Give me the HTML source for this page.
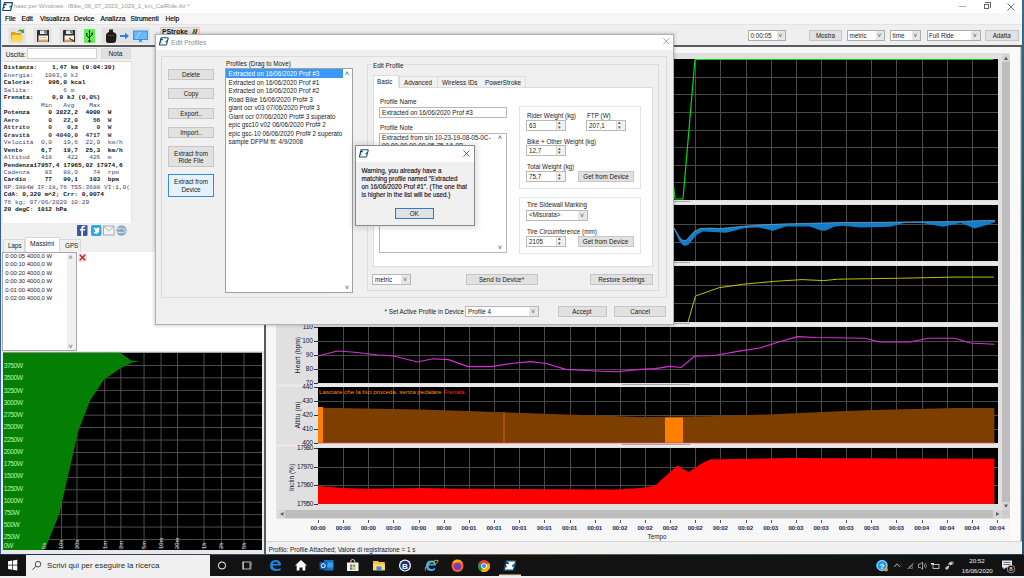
<!DOCTYPE html><html><head><meta charset="utf-8"><style>
*{margin:0;padding:0;box-sizing:border-box}
html,body{width:1024px;height:578px;overflow:hidden;background:#f0f0f0;position:relative;font-family:"Liberation Sans",sans-serif}
.a{position:absolute}
.t{position:absolute;font-family:"Liberation Sans",sans-serif;font-size:6.3px;line-height:7px;white-space:nowrap;color:#1a1a1a}
.btn{position:absolute;background:#e1e1e1;border:1px solid #c6c6c6;font-family:"Liberation Sans",sans-serif;font-size:6.3px;color:#1a1a1a;text-align:center;white-space:nowrap}
.inp{position:absolute;background:#fff;border:1px solid #b8b8b8;font-family:"Liberation Sans",sans-serif;font-size:6.3px;color:#1a1a1a;white-space:nowrap;overflow:hidden}
.mono{position:absolute;font-family:"Liberation Mono",monospace;font-size:6.2px;line-height:7.47px;white-space:pre;font-weight:bold;color:#111}
</style></head><body>
<div class="a" style="left:0px;top:0px;width:1024px;height:578px;background:#f0f0f0"></div>
<div class="a" style="left:0px;top:0px;width:1.3px;height:555px;background:#2f5ea6"></div>
<div class="a" style="left:1022px;top:0px;width:2px;height:555px;background:linear-gradient(#3a6a8a,#2a5060 40%,#4a6a70 70%,#305070)"></div>
<div class="a" style="left:2px;top:0px;width:1020px;height:12.5px;background:#fff"></div>
<svg class="a" style="left:2px;top:2px" width="11" height="9" viewBox="0 0 10 8.5"><path d="M2.3 0.6 H9.2 Q9.9 0.8 9.6 1.6 L8 7.6 Q7.8 8.2 7.1 8.2 H1 Q0.3 8 0.6 7.3 L2 1.2 Q2.1 0.6 2.3 0.6 Z" fill="#fff" stroke="#0f4a68" stroke-width="1.15"/><path d="M1.6 2.7 Q3 2.4 3.4 1.6 M1.9 2.6 H4.2 M1.3 5.2 H2.6 M6.8 5 Q7.8 4.6 8.2 3.6" stroke="#0f4a68" stroke-width="1.1" fill="none"/><path d="M1.4 3.2 H8.4 L8 4.6 H1.1 Z" fill="#0f4a68" opacity="0.0"/></svg>
<div class="t" style="left:13.7px;top:3.2px;color:#9c9c9c;font-size:6px">haac per Windows:&nbsp; iBike_06_07_2020_1029_1_km_CalRide.ibr *</div>
<div class="a" style="left:959px;top:6px;width:7px;height:0.8px;background:#b0b0b0"></div>
<div class="a" style="left:983.5px;top:3.5px;width:5.5px;height:5.5px;border:0.8px solid #666"></div>
<div class="a" style="left:985px;top:2.2px;width:5.5px;height:5.5px;border-top:0.8px solid #666;border-right:0.8px solid #666"></div>
<svg class="a" style="left:1007px;top:2.5px" width="8" height="8"><path d="M0.5 0.5 L7.5 7.5 M7.5 0.5 L0.5 7.5" stroke="#555" stroke-width="0.8"/></svg>
<div class="a" style="left:2px;top:12.5px;width:1020px;height:12px;background:#f7f7f7;border-bottom:1px solid #e4e4e4"></div>
<div class="t" style="left:5px;top:14.5px;font-size:6.6px;color:#000;-webkit-text-stroke:0.15px #000">File</div>
<div class="t" style="left:21.5px;top:14.5px;font-size:6.6px;color:#000;-webkit-text-stroke:0.15px #000">Edit</div>
<div class="t" style="left:40px;top:14.5px;font-size:6.6px;color:#000;-webkit-text-stroke:0.15px #000">Visualizza</div>
<div class="t" style="left:74px;top:14.5px;font-size:6.6px;color:#000;-webkit-text-stroke:0.15px #000">Device</div>
<div class="t" style="left:100.5px;top:14.5px;font-size:6.6px;color:#000;-webkit-text-stroke:0.15px #000">Analizza</div>
<div class="t" style="left:130.5px;top:14.5px;font-size:6.6px;color:#000;-webkit-text-stroke:0.15px #000">Strumenti</div>
<div class="t" style="left:165.5px;top:14.5px;font-size:6.6px;color:#000;-webkit-text-stroke:0.15px #000">Help</div>
<div class="a" style="left:2px;top:24.5px;width:1020px;height:20.5px;background:#efefef"></div>
<div class="a" style="left:2px;top:45px;width:1020px;height:2.4px;background:#5c5c5c"></div>
<div class="a" style="left:8.3px;top:26.8px;width:17.7px;height:17.6px;background:#e2e2e2;border:1px solid #e9e9e9"></div>
<div class="a" style="left:33.2px;top:26.8px;width:18.599999999999994px;height:17.6px;background:#e2e2e2;border:1px solid #e9e9e9"></div>
<div class="a" style="left:59px;top:26.8px;width:18.599999999999994px;height:17.6px;background:#e2e2e2;border:1px solid #e9e9e9"></div>
<div class="a" style="left:100.6px;top:26.8px;width:50.80000000000001px;height:17.6px;background:#e2e2e2;border:1px solid #e9e9e9"></div>
<svg class="a" style="left:10px;top:28px" width="15" height="15" viewBox="0 0 15 15"><path d="M1 4 H5 L6 5 H11 V13 H1 Z" fill="#e0a020"/><path d="M2.5 7 H13.5 L11.5 13.5 H0.8 Z" fill="#ffd84a"/><path d="M8 3 Q10 0.5 12.5 2 L13.5 1 L14 5 L10.5 4.6 L11.6 3.6 Q10 2.4 8.5 3.8 Z" fill="#2a9a2a"/></svg>
<svg class="a" style="left:36.5px;top:29.5px" width="12.5" height="12" viewBox="0 0 12.5 12"><rect x="0" y="0" width="12.5" height="12" rx="1" fill="#2e2e2e"/><rect x="3" y="0.5" width="6.5" height="3.5" fill="#e8e8e8"/><rect x="7.5" y="1" width="1.2" height="2.4" fill="#333"/><rect x="1.5" y="5.5" width="9.5" height="6" fill="#f4f4f4"/><rect x="1.5" y="9.5" width="9.5" height="2" fill="#f0a040"/><rect x="2.5" y="7" width="7.5" height="0.6" fill="#9ab"/></svg>
<svg class="a" style="left:62.5px;top:29.5px" width="12.5" height="12" viewBox="0 0 12.5 12"><rect x="0" y="0" width="12.5" height="12" rx="1" fill="#2e2e2e"/><rect x="3" y="0.5" width="6.5" height="3.5" fill="#e8e8e8"/><rect x="7.5" y="1" width="1.2" height="2.4" fill="#333"/><rect x="1.5" y="5.5" width="9.5" height="6" fill="#f4f4f4"/><rect x="1.5" y="9.5" width="9.5" height="2" fill="#f0a040"/><path d="M6 8 L10.5 11.5 L11.5 12 L11 11 Z" stroke="#704020" stroke-width="0.9"/></svg>
<div class="a" style="left:84px;top:28.8px;width:11.2px;height:14.2px;background:#5ef052"></div>
<svg class="a" style="left:85px;top:29.5px" width="9" height="13" viewBox="0 0 9 13"><path d="M4.5 1 V11 M4.5 8 L1.8 6 V4 M4.5 7 L7.2 5 V3.5" stroke="#111" stroke-width="0.9" fill="none"/><circle cx="4.5" cy="11" r="1.2" fill="#111"/><path d="M3.5 1.5 L4.5 0 L5.5 1.5 Z" fill="#111"/><circle cx="1.8" cy="3.8" r="0.8" fill="#111"/><rect x="6.5" y="2.7" width="1.4" height="1.4" fill="#111"/></svg>
<svg class="a" style="left:105px;top:28px" width="45" height="16" viewBox="0 0 45 16"><path d="M4 1.5 H8 V4 Q11 4.5 11.5 7 L11 13 Q10.5 15 8 15 H3.5 Q1 15 1 12.5 V7 Q1.5 4.5 4 4 Z" fill="#1c1c1c"/><rect x="2.5" y="7" width="7" height="0.8" fill="#a02020"/><path d="M15 7 H20 V4.8 L24 8 L20 11.2 V9 H15 Z" fill="#2a80e0"/><rect x="28" y="2.5" width="15" height="9.5" fill="#3a90e8"/><path d="M29 3.5 H42 V11 H29 Z" fill="#66b8f8"/><path d="M31 11 L35 4" stroke="#c0e4ff" stroke-width="0.8"/><rect x="34" y="12" width="3" height="2" fill="#4a9ae0"/><rect x="32" y="14" width="7" height="1" fill="#c8e0f0"/></svg>
<div class="a" style="left:159.5px;top:26.8px;width:40px;height:8px;background:#e4e4e4;border:1px solid #cfcfcf;border-bottom:none"></div>
<div class="t" style="left:162px;top:27.8px;font-weight:bold;font-size:6.8px;color:#111">PStroke</div>
<svg class="a" style="left:190px;top:27.5px" width="8" height="7"><path d="M2 6.5 L3.5 1 L5.5 1 L4 6.5 Z" fill="#20a020"/><path d="M4.5 6.5 L6 1 L7.8 1 L6.3 6.5 Z" fill="#e02020"/></svg>
<div class="inp" style="left:748px;top:30.2px;width:38px;height:11px;line-height:10px;padding-left:1.5px;border-color:#adadad">0:00:05</div>
<div class="a" style="left:776.5px;top:31.2px;width:8.5px;height:9px;background:#e6e6e6"></div>
<div class="t" style="left:778.2px;top:32.2px;font-size:7px;color:#555">&#x2c5;</div>
<div class="btn" style="left:809px;top:30.2px;width:33px;height:11px;line-height:10px;">Mostra</div>
<div class="inp" style="left:847px;top:30.2px;width:38px;height:11px;line-height:10px;padding-left:1.5px;border-color:#adadad">metric</div>
<div class="a" style="left:875.5px;top:31.2px;width:8.5px;height:9px;background:#e6e6e6"></div>
<div class="t" style="left:877.2px;top:32.2px;font-size:7px;color:#555">&#x2c5;</div>
<div class="inp" style="left:890px;top:30.2px;width:31px;height:11px;line-height:10px;padding-left:1.5px;border-color:#adadad">time</div>
<div class="a" style="left:911.5px;top:31.2px;width:8.5px;height:9px;background:#e6e6e6"></div>
<div class="t" style="left:913.2px;top:32.2px;font-size:7px;color:#555">&#x2c5;</div>
<div class="inp" style="left:926.5px;top:30.2px;width:54px;height:11px;line-height:10px;padding-left:1.5px;border-color:#adadad">Full Ride</div>
<div class="a" style="left:971.0px;top:31.2px;width:8.5px;height:9px;background:#e6e6e6"></div>
<div class="t" style="left:972.7px;top:32.2px;font-size:7px;color:#555">&#x2c5;</div>
<div class="btn" style="left:985px;top:30.2px;width:33.5px;height:11px;line-height:10px;">Adatta</div>
<div class="a" style="left:2px;top:47.4px;width:262px;height:507.6px;background:#f0f0f0"></div>
<div class="t" style="left:5.7px;top:50.5px;font-size:6.6px;color:#222">Uscita:</div>
<div class="a" style="left:26.7px;top:48.1px;width:70.7px;height:10.7px;background:#fff;border:1px solid #d0d0d0"></div>
<div class="btn" style="left:100.5px;top:48.1px;width:30.1px;height:10.7px;line-height:9.7px;font-size:6.6px;border-color:#dadada">Nota</div>
<div class="a" style="left:2.5px;top:61px;width:128.5px;height:161.5px;background:#fff;border-top:1px solid #d8d8d8"></div>
<div class="mono" style="left:3.8px;top:64.40px;color:#111;font-weight:bold">Distanza:    1,47 km (0:04:30)</div>
<div class="mono" style="left:3.8px;top:71.87px;color:#4a4468;font-weight:normal">Energia:   1083,0 kJ</div>
<div class="mono" style="left:3.8px;top:79.34px;color:#111;font-weight:bold">Calorie:    996,0 kcal</div>
<div class="mono" style="left:3.8px;top:86.81px;color:#4a4468;font-weight:normal">Salita:         6 m</div>
<div class="mono" style="left:3.8px;top:94.28px;color:#111;font-weight:bold">Frenata:     0,0 kJ (0,0%)</div>
<div class="mono" style="left:3.8px;top:101.75px;color:#4a4468;font-weight:normal">          Min   Avg    Max</div>
<div class="mono" style="left:3.8px;top:109.22px;color:#111;font-weight:bold">Potenza     0 3822,2  4000  W</div>
<div class="mono" style="left:3.8px;top:116.69px;color:#303048;font-weight:bold">Aero        0   22,0    56  W</div>
<div class="mono" style="left:3.8px;top:124.16px;color:#303048;font-weight:bold">Attrito     0    0,2     0  W</div>
<div class="mono" style="left:3.8px;top:131.63px;color:#303048;font-weight:bold">Gravit&#224;     0 4040,0  4717  W</div>
<div class="mono" style="left:3.8px;top:139.10px;color:#4a4468;font-weight:normal">Velocit&#224;  0,0   19,6  22,9  km/h</div>
<div class="mono" style="left:3.8px;top:146.57px;color:#111;font-weight:bold">Vento     6,7   19,7  25,3  km/h</div>
<div class="mono" style="left:3.8px;top:154.04px;color:#4a4468;font-weight:normal">Altitud   418    422   426  m</div>
<div class="mono" style="left:3.8px;top:161.51px;color:#111;font-weight:bold">Pendenza17957,4 17965,02 17974,6</div>
<div class="mono" style="left:3.8px;top:168.98px;color:#4a4468;font-weight:normal">Cadenza    83   88,0    74  rpm</div>
<div class="mono" style="left:3.8px;top:176.45px;color:#111;font-weight:bold">Cardio     77   90,1   103  bpm</div>
<div class="mono" style="left:3.8px;top:183.92px;color:#4a4468;font-weight:normal">NP:3884W IF:18,76 TSS:3688 VI:1,0(</div>
<div class="mono" style="left:3.8px;top:191.39px;color:#111;font-weight:bold">CdA: 0,320 m^2; Crr: 0,0074</div>
<div class="mono" style="left:3.8px;top:198.86px;color:#4a4468;font-weight:normal">76 kg; 07/06/2020 10:29</div>
<div class="mono" style="left:3.8px;top:206.33px;color:#111;font-weight:bold">20 degC: 1012 hPa</div>
<div class="a" style="left:131px;top:61px;width:0.8px;height:161.5px;background:#e4e4e4"></div>
<svg class="a" style="left:77px;top:225px" width="50" height="11" viewBox="0 0 50 11"><rect x="0" y="0" width="10.5" height="11" rx="1" fill="#3b5a9a"/><path d="M6 11 V5.5 H8 L8.3 4 H6 V3 Q6 2.3 6.8 2.3 H8.3 V0.8 H6.5 Q4.3 0.8 4.3 3 V4 H3 V5.5 H4.3 V11 Z" fill="#fff"/><rect x="14" y="0" width="10.5" height="11" rx="2" fill="#2aa8e0"/><path d="M16.5 7.5 Q18 9.5 20.5 8.5 Q22.5 7.5 22.5 4 L23.3 3.2 L22.3 3.4 Q21 1.5 19.5 3.5 Q17.8 3 16.7 2.2 Q16.7 4.2 18 4.8 Q17.2 5.5 18.5 6.5 Q17.5 7.3 16.5 7.5 Z" fill="#fff"/><rect x="26.5" y="1" width="10.5" height="9" fill="#f4f4f4" stroke="#9a9a9a" stroke-width="0.8"/><path d="M26.8 1.3 L31.75 6 L36.7 1.3" fill="none" stroke="#9a9a9a" stroke-width="0.8"/><circle cx="44.5" cy="5.5" r="5.2" fill="#8aaac8"/><path d="M40 4 Q44.5 2 49 5 M39.8 7 Q44.5 9 49.2 6.5" stroke="#d8e8f4" stroke-width="1" fill="none"/></svg>
<div class="a" style="left:2.5px;top:238.5px;width:22.5px;height:14px;background:#f0f0f0;border:1px solid #d8d8d8;border-bottom:none"></div>
<div class="a" style="left:25px;top:237px;width:35px;height:15.5px;background:#fff;border:1px solid #d8d8d8;border-bottom:none"></div>
<div class="a" style="left:60px;top:238.5px;width:21px;height:14px;background:#f0f0f0;border:1px solid #d8d8d8;border-bottom:none;border-left:none"></div>
<div class="t" style="left:8px;top:242px;font-size:6.3px">Laps</div>
<div class="t" style="left:30px;top:240px;font-size:6.6px">Massimi</div>
<div class="t" style="left:65px;top:242px;font-size:6.3px">GPS</div>
<div class="a" style="left:77px;top:252px;width:187px;height:100px;background:#fff"></div>
<div class="a" style="left:2px;top:252px;width:74.5px;height:98.5px;background:#fff;border:1px solid #a8a8a8"></div>
<div class="a" style="left:67px;top:253px;width:8.5px;height:96.5px;background:#f0f0f0"></div>
<div class="t" style="left:68.5px;top:254px;font-size:7px;color:#555">&#x2c4;</div>
<div class="t" style="left:68.5px;top:343px;font-size:7px;color:#555">&#x2c5;</div>
<div class="t" style="left:5.3px;top:252.6px;font-size:5.95px;color:#1a1a40">0:00:05 4000,0 W</div>
<div class="t" style="left:5.3px;top:261.15999999999997px;font-size:5.95px;color:#1a1a40">0:00:10 4000,0 W</div>
<div class="t" style="left:5.3px;top:269.71999999999997px;font-size:5.95px;color:#1a1a40">0:00:20 4000,0 W</div>
<div class="t" style="left:5.3px;top:278.28px;font-size:5.95px;color:#1a1a40">0:00:30 4000,0 W</div>
<div class="t" style="left:5.3px;top:286.84px;font-size:5.95px;color:#1a1a40">0:01:00 4000,0 W</div>
<div class="t" style="left:5.3px;top:295.4px;font-size:5.95px;color:#1a1a40">0:02:00 4000,0 W</div>
<svg class="a" style="left:78px;top:253px" width="9" height="9" viewBox="0 0 9 9"><rect x="0" y="0" width="9" height="9" fill="#e8e8e8"/><path d="M1.8 1.8 L7.2 7.2 M7.2 1.8 L1.8 7.2" stroke="#e02020" stroke-width="1.6"/></svg>
<svg class="a" style="left:0;top:0" width="270" height="578">
<rect x="2" y="351" width="262" height="203" fill="#e8e8e8"/>
<rect x="3" y="352.7" width="259" height="197.3" fill="#000"/>
<rect x="44" y="352.7" width="0.9" height="197" fill="#555"/>
<rect x="61" y="352.7" width="0.9" height="197" fill="#555"/>
<rect x="76.5" y="352.7" width="0.9" height="197" fill="#555"/>
<rect x="104.3" y="352.7" width="0.9" height="197" fill="#555"/>
<rect x="120.4" y="352.7" width="0.9" height="197" fill="#555"/>
<rect x="143.6" y="352.7" width="0.9" height="197" fill="#555"/>
<rect x="160.6" y="352.7" width="0.9" height="197" fill="#555"/>
<rect x="177" y="352.7" width="0.9" height="197" fill="#555"/>
<rect x="203.5" y="352.7" width="0.9" height="197" fill="#555"/>
<rect x="221" y="352.7" width="0.9" height="197" fill="#555"/>
<rect x="243.5" y="352.7" width="0.9" height="197" fill="#555"/>
<rect x="3" y="365.0" width="259" height="0.9" fill="#555"/>
<rect x="3" y="377.4" width="259" height="0.9" fill="#555"/>
<rect x="3" y="389.9" width="259" height="0.9" fill="#555"/>
<rect x="3" y="402.3" width="259" height="0.9" fill="#555"/>
<rect x="3" y="414.7" width="259" height="0.9" fill="#555"/>
<rect x="3" y="427.1" width="259" height="0.9" fill="#555"/>
<rect x="3" y="439.6" width="259" height="0.9" fill="#555"/>
<rect x="3" y="452.0" width="259" height="0.9" fill="#555"/>
<rect x="3" y="464.4" width="259" height="0.9" fill="#555"/>
<rect x="3" y="476.9" width="259" height="0.9" fill="#555"/>
<rect x="3" y="489.3" width="259" height="0.9" fill="#555"/>
<rect x="3" y="501.7" width="259" height="0.9" fill="#555"/>
<rect x="3" y="514.2" width="259" height="0.9" fill="#555"/>
<rect x="3" y="526.6" width="259" height="0.9" fill="#555"/>
<rect x="3" y="539.0" width="259" height="0.9" fill="#555"/>
<polygon points="3,352.7 120.5,352.7 131,360.5 140,361 132,362.5 121,368 104,379.5 90.4,400 78,431.5 71.7,460 67,480 59.7,513 46.6,545 43,550 3,550" fill="#047f04"/>
<text x="3.8" y="367.9" font-family="Liberation Sans" font-size="6.7" fill="#b0f8a0" letter-spacing="-0.45">3750W</text>
<text x="3.8" y="380.4" font-family="Liberation Sans" font-size="6.7" fill="#b0f8a0" letter-spacing="-0.45">3500W</text>
<text x="3.8" y="392.9" font-family="Liberation Sans" font-size="6.7" fill="#b0f8a0" letter-spacing="-0.45">3250W</text>
<text x="3.8" y="404.9" font-family="Liberation Sans" font-size="6.7" fill="#b0f8a0" letter-spacing="-0.45">3000W</text>
<text x="3.8" y="416.9" font-family="Liberation Sans" font-size="6.7" fill="#b0f8a0" letter-spacing="-0.45">2750W</text>
<text x="3.8" y="429.29999999999995" font-family="Liberation Sans" font-size="6.7" fill="#b0f8a0" letter-spacing="-0.45">2500W</text>
<text x="3.8" y="441.5" font-family="Liberation Sans" font-size="6.7" fill="#b0f8a0" letter-spacing="-0.45">2250W</text>
<text x="3.8" y="453.5" font-family="Liberation Sans" font-size="6.7" fill="#b0f8a0" letter-spacing="-0.45">2000W</text>
<text x="3.8" y="465.9" font-family="Liberation Sans" font-size="6.7" fill="#b0f8a0" letter-spacing="-0.45">1750W</text>
<text x="3.8" y="478.4" font-family="Liberation Sans" font-size="6.7" fill="#b0f8a0" letter-spacing="-0.45">1500W</text>
<text x="3.8" y="490.59999999999997" font-family="Liberation Sans" font-size="6.7" fill="#b0f8a0" letter-spacing="-0.45">1250W</text>
<text x="3.8" y="502.59999999999997" font-family="Liberation Sans" font-size="6.7" fill="#b0f8a0" letter-spacing="-0.45">1000W</text>
<text x="3.8" y="514.9" font-family="Liberation Sans" font-size="6.7" fill="#b0f8a0" letter-spacing="-0.45">750W</text>
<text x="3.8" y="527.4" font-family="Liberation Sans" font-size="6.7" fill="#b0f8a0" letter-spacing="-0.45">500W</text>
<text x="3.8" y="539.4" font-family="Liberation Sans" font-size="6.7" fill="#b0f8a0" letter-spacing="-0.45">250W</text>
<text x="3.8" y="547.5" font-family="Liberation Sans" font-size="6.7" fill="#b0f8a0" letter-spacing="-0.45">0W</text>
<text x="0" y="0" font-family="Liberation Sans" font-size="5.8" fill="#e8e4f0" transform="translate(46.2,549) rotate(-90)">5s</text>
<text x="0" y="0" font-family="Liberation Sans" font-size="5.8" fill="#e8e4f0" transform="translate(63.2,549) rotate(-90)">10s</text>
<text x="0" y="0" font-family="Liberation Sans" font-size="5.8" fill="#e8e4f0" transform="translate(78.7,549) rotate(-90)">20s</text>
<text x="0" y="0" font-family="Liberation Sans" font-size="5.8" fill="#e8e4f0" transform="translate(106.5,549) rotate(-90)">1m</text>
<text x="0" y="0" font-family="Liberation Sans" font-size="5.8" fill="#e8e4f0" transform="translate(122.60000000000001,549) rotate(-90)">2m</text>
<text x="0" y="0" font-family="Liberation Sans" font-size="5.8" fill="#e8e4f0" transform="translate(145.79999999999998,549) rotate(-90)">5m</text>
<text x="0" y="0" font-family="Liberation Sans" font-size="5.8" fill="#e8e4f0" transform="translate(162.79999999999998,549) rotate(-90)">10m</text>
<text x="0" y="0" font-family="Liberation Sans" font-size="5.8" fill="#e8e4f0" transform="translate(179.2,549) rotate(-90)">20m</text>
<text x="0" y="0" font-family="Liberation Sans" font-size="5.8" fill="#e8e4f0" transform="translate(205.7,549) rotate(-90)">1h</text>
<text x="0" y="0" font-family="Liberation Sans" font-size="5.8" fill="#e8e4f0" transform="translate(223.2,549) rotate(-90)">2h</text>
<text x="0" y="0" font-family="Liberation Sans" font-size="5.8" fill="#e8e4f0" transform="translate(245.7,549) rotate(-90)">5h</text>
</svg>
<div class="a" style="left:264px;top:47.4px;width:2px;height:507.6px;background:#5a5a5a"></div>
<svg class="a" style="left:0;top:0" width="1024" height="578" shape-rendering="crispEdges">
<rect x="266" y="47" width="756" height="494" fill="#f7f7f7"/>
<rect x="276" y="53" width="734" height="466" fill="#e0e0e0"/>
<rect x="318" y="59" width="680" height="141" fill="#000"/>
<rect x="343" y="59" width="1" height="141" fill="#4a4a4a"/>
<rect x="368" y="59" width="1" height="141" fill="#4a4a4a"/>
<rect x="393" y="59" width="1" height="141" fill="#4a4a4a"/>
<rect x="419" y="59" width="1" height="141" fill="#4a4a4a"/>
<rect x="444" y="59" width="1" height="141" fill="#4a4a4a"/>
<rect x="469" y="59" width="1" height="141" fill="#4a4a4a"/>
<rect x="494" y="59" width="1" height="141" fill="#4a4a4a"/>
<rect x="519" y="59" width="1" height="141" fill="#4a4a4a"/>
<rect x="544" y="59" width="1" height="141" fill="#4a4a4a"/>
<rect x="570" y="59" width="1" height="141" fill="#4a4a4a"/>
<rect x="595" y="59" width="1" height="141" fill="#4a4a4a"/>
<rect x="620" y="59" width="1" height="141" fill="#4a4a4a"/>
<rect x="645" y="59" width="1" height="141" fill="#4a4a4a"/>
<rect x="670" y="59" width="1" height="141" fill="#4a4a4a"/>
<rect x="695" y="59" width="1" height="141" fill="#4a4a4a"/>
<rect x="720" y="59" width="1" height="141" fill="#4a4a4a"/>
<rect x="746" y="59" width="1" height="141" fill="#4a4a4a"/>
<rect x="771" y="59" width="1" height="141" fill="#4a4a4a"/>
<rect x="796" y="59" width="1" height="141" fill="#4a4a4a"/>
<rect x="821" y="59" width="1" height="141" fill="#4a4a4a"/>
<rect x="846" y="59" width="1" height="141" fill="#4a4a4a"/>
<rect x="871" y="59" width="1" height="141" fill="#4a4a4a"/>
<rect x="896" y="59" width="1" height="141" fill="#4a4a4a"/>
<rect x="922" y="59" width="1" height="141" fill="#4a4a4a"/>
<rect x="947" y="59" width="1" height="141" fill="#4a4a4a"/>
<rect x="972" y="59" width="1" height="141" fill="#4a4a4a"/>
<rect x="318" y="77" width="680" height="1" fill="#4a4a4a"/>
<rect x="318" y="94" width="680" height="1" fill="#4a4a4a"/>
<rect x="318" y="112" width="680" height="1" fill="#4a4a4a"/>
<rect x="318" y="130" width="680" height="1" fill="#4a4a4a"/>
<rect x="318" y="147" width="680" height="1" fill="#4a4a4a"/>
<rect x="318" y="165" width="680" height="1" fill="#4a4a4a"/>
<rect x="318" y="182" width="680" height="1" fill="#4a4a4a"/>
<rect x="318" y="205" width="680" height="56" fill="#000"/>
<rect x="343" y="205" width="1" height="56" fill="#4a4a4a"/>
<rect x="368" y="205" width="1" height="56" fill="#4a4a4a"/>
<rect x="393" y="205" width="1" height="56" fill="#4a4a4a"/>
<rect x="419" y="205" width="1" height="56" fill="#4a4a4a"/>
<rect x="444" y="205" width="1" height="56" fill="#4a4a4a"/>
<rect x="469" y="205" width="1" height="56" fill="#4a4a4a"/>
<rect x="494" y="205" width="1" height="56" fill="#4a4a4a"/>
<rect x="519" y="205" width="1" height="56" fill="#4a4a4a"/>
<rect x="544" y="205" width="1" height="56" fill="#4a4a4a"/>
<rect x="570" y="205" width="1" height="56" fill="#4a4a4a"/>
<rect x="595" y="205" width="1" height="56" fill="#4a4a4a"/>
<rect x="620" y="205" width="1" height="56" fill="#4a4a4a"/>
<rect x="645" y="205" width="1" height="56" fill="#4a4a4a"/>
<rect x="670" y="205" width="1" height="56" fill="#4a4a4a"/>
<rect x="695" y="205" width="1" height="56" fill="#4a4a4a"/>
<rect x="720" y="205" width="1" height="56" fill="#4a4a4a"/>
<rect x="746" y="205" width="1" height="56" fill="#4a4a4a"/>
<rect x="771" y="205" width="1" height="56" fill="#4a4a4a"/>
<rect x="796" y="205" width="1" height="56" fill="#4a4a4a"/>
<rect x="821" y="205" width="1" height="56" fill="#4a4a4a"/>
<rect x="846" y="205" width="1" height="56" fill="#4a4a4a"/>
<rect x="871" y="205" width="1" height="56" fill="#4a4a4a"/>
<rect x="896" y="205" width="1" height="56" fill="#4a4a4a"/>
<rect x="922" y="205" width="1" height="56" fill="#4a4a4a"/>
<rect x="947" y="205" width="1" height="56" fill="#4a4a4a"/>
<rect x="972" y="205" width="1" height="56" fill="#4a4a4a"/>
<rect x="318" y="224" width="680" height="1" fill="#4a4a4a"/>
<rect x="318" y="242" width="680" height="1" fill="#4a4a4a"/>
<rect x="318" y="266" width="680" height="56" fill="#000"/>
<rect x="343" y="266" width="1" height="56" fill="#4a4a4a"/>
<rect x="368" y="266" width="1" height="56" fill="#4a4a4a"/>
<rect x="393" y="266" width="1" height="56" fill="#4a4a4a"/>
<rect x="419" y="266" width="1" height="56" fill="#4a4a4a"/>
<rect x="444" y="266" width="1" height="56" fill="#4a4a4a"/>
<rect x="469" y="266" width="1" height="56" fill="#4a4a4a"/>
<rect x="494" y="266" width="1" height="56" fill="#4a4a4a"/>
<rect x="519" y="266" width="1" height="56" fill="#4a4a4a"/>
<rect x="544" y="266" width="1" height="56" fill="#4a4a4a"/>
<rect x="570" y="266" width="1" height="56" fill="#4a4a4a"/>
<rect x="595" y="266" width="1" height="56" fill="#4a4a4a"/>
<rect x="620" y="266" width="1" height="56" fill="#4a4a4a"/>
<rect x="645" y="266" width="1" height="56" fill="#4a4a4a"/>
<rect x="670" y="266" width="1" height="56" fill="#4a4a4a"/>
<rect x="695" y="266" width="1" height="56" fill="#4a4a4a"/>
<rect x="720" y="266" width="1" height="56" fill="#4a4a4a"/>
<rect x="746" y="266" width="1" height="56" fill="#4a4a4a"/>
<rect x="771" y="266" width="1" height="56" fill="#4a4a4a"/>
<rect x="796" y="266" width="1" height="56" fill="#4a4a4a"/>
<rect x="821" y="266" width="1" height="56" fill="#4a4a4a"/>
<rect x="846" y="266" width="1" height="56" fill="#4a4a4a"/>
<rect x="871" y="266" width="1" height="56" fill="#4a4a4a"/>
<rect x="896" y="266" width="1" height="56" fill="#4a4a4a"/>
<rect x="922" y="266" width="1" height="56" fill="#4a4a4a"/>
<rect x="947" y="266" width="1" height="56" fill="#4a4a4a"/>
<rect x="972" y="266" width="1" height="56" fill="#4a4a4a"/>
<rect x="318" y="285" width="680" height="1" fill="#4a4a4a"/>
<rect x="318" y="303" width="680" height="1" fill="#4a4a4a"/>
<rect x="318" y="327" width="680" height="56" fill="#000"/>
<rect x="343" y="327" width="1" height="56" fill="#4a4a4a"/>
<rect x="368" y="327" width="1" height="56" fill="#4a4a4a"/>
<rect x="393" y="327" width="1" height="56" fill="#4a4a4a"/>
<rect x="419" y="327" width="1" height="56" fill="#4a4a4a"/>
<rect x="444" y="327" width="1" height="56" fill="#4a4a4a"/>
<rect x="469" y="327" width="1" height="56" fill="#4a4a4a"/>
<rect x="494" y="327" width="1" height="56" fill="#4a4a4a"/>
<rect x="519" y="327" width="1" height="56" fill="#4a4a4a"/>
<rect x="544" y="327" width="1" height="56" fill="#4a4a4a"/>
<rect x="570" y="327" width="1" height="56" fill="#4a4a4a"/>
<rect x="595" y="327" width="1" height="56" fill="#4a4a4a"/>
<rect x="620" y="327" width="1" height="56" fill="#4a4a4a"/>
<rect x="645" y="327" width="1" height="56" fill="#4a4a4a"/>
<rect x="670" y="327" width="1" height="56" fill="#4a4a4a"/>
<rect x="695" y="327" width="1" height="56" fill="#4a4a4a"/>
<rect x="720" y="327" width="1" height="56" fill="#4a4a4a"/>
<rect x="746" y="327" width="1" height="56" fill="#4a4a4a"/>
<rect x="771" y="327" width="1" height="56" fill="#4a4a4a"/>
<rect x="796" y="327" width="1" height="56" fill="#4a4a4a"/>
<rect x="821" y="327" width="1" height="56" fill="#4a4a4a"/>
<rect x="846" y="327" width="1" height="56" fill="#4a4a4a"/>
<rect x="871" y="327" width="1" height="56" fill="#4a4a4a"/>
<rect x="896" y="327" width="1" height="56" fill="#4a4a4a"/>
<rect x="922" y="327" width="1" height="56" fill="#4a4a4a"/>
<rect x="947" y="327" width="1" height="56" fill="#4a4a4a"/>
<rect x="972" y="327" width="1" height="56" fill="#4a4a4a"/>
<rect x="318" y="341" width="680" height="1" fill="#4a4a4a"/>
<rect x="318" y="355" width="680" height="1" fill="#4a4a4a"/>
<rect x="318" y="369" width="680" height="1" fill="#4a4a4a"/>
<rect x="318" y="387" width="680" height="56" fill="#000"/>
<rect x="343" y="387" width="1" height="56" fill="#4a4a4a"/>
<rect x="368" y="387" width="1" height="56" fill="#4a4a4a"/>
<rect x="393" y="387" width="1" height="56" fill="#4a4a4a"/>
<rect x="419" y="387" width="1" height="56" fill="#4a4a4a"/>
<rect x="444" y="387" width="1" height="56" fill="#4a4a4a"/>
<rect x="469" y="387" width="1" height="56" fill="#4a4a4a"/>
<rect x="494" y="387" width="1" height="56" fill="#4a4a4a"/>
<rect x="519" y="387" width="1" height="56" fill="#4a4a4a"/>
<rect x="544" y="387" width="1" height="56" fill="#4a4a4a"/>
<rect x="570" y="387" width="1" height="56" fill="#4a4a4a"/>
<rect x="595" y="387" width="1" height="56" fill="#4a4a4a"/>
<rect x="620" y="387" width="1" height="56" fill="#4a4a4a"/>
<rect x="645" y="387" width="1" height="56" fill="#4a4a4a"/>
<rect x="670" y="387" width="1" height="56" fill="#4a4a4a"/>
<rect x="695" y="387" width="1" height="56" fill="#4a4a4a"/>
<rect x="720" y="387" width="1" height="56" fill="#4a4a4a"/>
<rect x="746" y="387" width="1" height="56" fill="#4a4a4a"/>
<rect x="771" y="387" width="1" height="56" fill="#4a4a4a"/>
<rect x="796" y="387" width="1" height="56" fill="#4a4a4a"/>
<rect x="821" y="387" width="1" height="56" fill="#4a4a4a"/>
<rect x="846" y="387" width="1" height="56" fill="#4a4a4a"/>
<rect x="871" y="387" width="1" height="56" fill="#4a4a4a"/>
<rect x="896" y="387" width="1" height="56" fill="#4a4a4a"/>
<rect x="922" y="387" width="1" height="56" fill="#4a4a4a"/>
<rect x="947" y="387" width="1" height="56" fill="#4a4a4a"/>
<rect x="972" y="387" width="1" height="56" fill="#4a4a4a"/>
<rect x="318" y="401" width="680" height="1" fill="#4a4a4a"/>
<rect x="318" y="415" width="680" height="1" fill="#4a4a4a"/>
<rect x="318" y="429" width="680" height="1" fill="#4a4a4a"/>
<rect x="318" y="448" width="680" height="56" fill="#000"/>
<rect x="343" y="448" width="1" height="56" fill="#4a4a4a"/>
<rect x="368" y="448" width="1" height="56" fill="#4a4a4a"/>
<rect x="393" y="448" width="1" height="56" fill="#4a4a4a"/>
<rect x="419" y="448" width="1" height="56" fill="#4a4a4a"/>
<rect x="444" y="448" width="1" height="56" fill="#4a4a4a"/>
<rect x="469" y="448" width="1" height="56" fill="#4a4a4a"/>
<rect x="494" y="448" width="1" height="56" fill="#4a4a4a"/>
<rect x="519" y="448" width="1" height="56" fill="#4a4a4a"/>
<rect x="544" y="448" width="1" height="56" fill="#4a4a4a"/>
<rect x="570" y="448" width="1" height="56" fill="#4a4a4a"/>
<rect x="595" y="448" width="1" height="56" fill="#4a4a4a"/>
<rect x="620" y="448" width="1" height="56" fill="#4a4a4a"/>
<rect x="645" y="448" width="1" height="56" fill="#4a4a4a"/>
<rect x="670" y="448" width="1" height="56" fill="#4a4a4a"/>
<rect x="695" y="448" width="1" height="56" fill="#4a4a4a"/>
<rect x="720" y="448" width="1" height="56" fill="#4a4a4a"/>
<rect x="746" y="448" width="1" height="56" fill="#4a4a4a"/>
<rect x="771" y="448" width="1" height="56" fill="#4a4a4a"/>
<rect x="796" y="448" width="1" height="56" fill="#4a4a4a"/>
<rect x="821" y="448" width="1" height="56" fill="#4a4a4a"/>
<rect x="846" y="448" width="1" height="56" fill="#4a4a4a"/>
<rect x="871" y="448" width="1" height="56" fill="#4a4a4a"/>
<rect x="896" y="448" width="1" height="56" fill="#4a4a4a"/>
<rect x="922" y="448" width="1" height="56" fill="#4a4a4a"/>
<rect x="947" y="448" width="1" height="56" fill="#4a4a4a"/>
<rect x="972" y="448" width="1" height="56" fill="#4a4a4a"/>
<rect x="318" y="467" width="680" height="1" fill="#4a4a4a"/>
<rect x="318" y="485" width="680" height="1" fill="#4a4a4a"/>
<rect x="276" y="201" width="722" height="3" fill="#e8e8e8"/>
<rect x="622" y="201" width="68" height="1" fill="#a8a8a8"/>
<rect x="276" y="262" width="722" height="3" fill="#e8e8e8"/>
<rect x="622" y="262" width="68" height="1" fill="#a8a8a8"/>
<rect x="276" y="323" width="722" height="3" fill="#e8e8e8"/>
<rect x="622" y="323" width="68" height="1" fill="#a8a8a8"/>
<rect x="276" y="384" width="722" height="3" fill="#e8e8e8"/>
<rect x="622" y="384" width="68" height="1" fill="#a8a8a8"/>
<rect x="276" y="444" width="722" height="3" fill="#e8e8e8"/>
<rect x="622" y="444" width="68" height="1" fill="#a8a8a8"/>
<rect x="998" y="53" width="4" height="458" fill="#e0e0e0"/>
<rect x="1002" y="54" width="8" height="456" fill="#bdbdbd"/>
<rect x="1002" y="54" width="8" height="8" fill="#d6d6d6"/><path d="M1004 60 L1006 56.5 L1008 60 Z" fill="#606060" shape-rendering="auto"/>
<rect x="1002" y="502" width="8" height="8" fill="#d6d6d6"/><path d="M1004 504.5 L1006 508 L1008 504.5 Z" fill="#606060" shape-rendering="auto"/>
<rect x="278" y="510" width="724" height="8" fill="#bdbdbd"/><rect x="1002" y="510" width="8" height="8" fill="#cdcdcd"/>
<rect x="278" y="510" width="7" height="8" fill="#d6d6d6"/><path d="M283.5 512 L280 514 L283.5 516 Z" fill="#606060" shape-rendering="auto"/>
<rect x="993" y="510" width="9" height="8" fill="#d6d6d6"/><path d="M996 512 L999.5 514 L996 516 Z" fill="#606060" shape-rendering="auto"/>
<rect x="1010" y="47" width="9.5" height="494" fill="#fafafa"/>
<rect x="1019.5" y="47" width="1.5" height="507" fill="#c8c8c8"/><rect x="1021" y="47" width="1" height="507" fill="#7a7a7a"/>
<g shape-rendering="auto">
<polyline points="673,180 675,199 683,199 695,59.5 993,59.5" fill="none" stroke="#00e000" stroke-width="1.2"/>
<polygon points="318,226 660,226 674,227.5 678,235 682,240 686,240.5 690,236 694,231.5 700,228.5 710,228 720,228.5 740,226.5 760,225 780,224 800,223.5 820,223 840,222.5 880,222.3 920,221.8 960,221.4 975,220.8 995,220.3 995,222.3 987,225 974.7,228.5 960.6,223 943,226.7 922,223 904.4,223 890.3,226.7 860.4,227.6 842.8,225.8 834,226.7 825.3,230.7 820,230.2 810,226.5 786,226.5 773,230.7 758,227.5 745,228 733,231 726,232.7 713,232 703,231.5 697,234.5 692,240.5 688,245 684,246 680,242.5 677,236 674,229.5 660,229 318,229" fill="#147dc8"/>
<polyline points="318,226 660,226 674,227.5 678,235 682,240 686,240.5 690,236 694,231.5 700,228.5 710,228 720,228.5 740,226.5 760,225 780,224 800,223.5 820,223 840,222.5 880,222.3 920,221.8 960,221.4 975,220.8 995,220.3" fill="none" stroke="#a8d0f0" stroke-width="0.5"/>
<polyline points="688,322 695.5,296 718.7,287.8 743.5,284.2 773.8,281.4 802,279.6 823.5,280.6 837.7,279.2 901.7,278.2 955,277.1 994,277.1" fill="none" stroke="#c0c000" stroke-width="1"/>
<polyline points="318,356 337.3,351 354.8,352.2 378.3,355 393.9,356 417.3,362 433,358.8 448.6,359.6 468,366.6 491.6,366.6 511,363.5 530.6,361.6 546,363.5 565.8,369.4 585.3,370.5 601,371.3 616.6,371.7 640,369.4 655,368.6 670,366.4 681.2,367.5 694.4,356.2 715,355.5 737.5,351.4 760,348 778.7,342 797.5,336.7 816.2,337.5 865,338.2 880,342 910,342 928.7,338.2 955,338.2 970,343 994.4,344.2" fill="none" stroke="#d830d8" stroke-width="1.15"/>
<polygon points="318,407 323,407.7 421,409.6 504,412.3 640,417 709,416.2 767.5,414.4 827.5,411.7 872.5,409.9 955,408 994.4,408 994.4,443 318,443" fill="#7c3f00"/>
<rect x="318" y="407" width="5" height="36" fill="#ff8000"/>
<rect x="665" y="417.5" width="18" height="25.5" fill="#ff8000"/>
<rect x="503.5" y="412" width="1" height="31" fill="#d06010"/>
<rect x="318" y="442.5" width="677" height="0.8" fill="#e04040"/>
<polygon points="318,486 343,488 366.6,488.8 421,488 460,488.8 616.6,489.6 640,488 655,485.7 666.2,475.6 677.5,465.5 688.7,471.9 700,464.4 709.4,459.5 790,458 994.4,458.7 994.4,504 318,504" fill="#ff0000"/>
</g>
<text x="313" y="329.3" text-anchor="end" font-family="Liberation Sans" font-size="6.5" fill="#141438" >110</text>
<rect x="314" y="327" width="4" height="1" fill="#333"/>
<text x="313" y="343.3" text-anchor="end" font-family="Liberation Sans" font-size="6.5" fill="#141438" >100</text>
<rect x="314" y="341" width="4" height="1" fill="#333"/>
<text x="313" y="357.3" text-anchor="end" font-family="Liberation Sans" font-size="6.5" fill="#141438" >90</text>
<rect x="314" y="355" width="4" height="1" fill="#333"/>
<text x="313" y="371.3" text-anchor="end" font-family="Liberation Sans" font-size="6.5" fill="#141438" >80</text>
<rect x="314" y="369" width="4" height="1" fill="#333"/>
<text x="313" y="385.3" text-anchor="end" font-family="Liberation Sans" font-size="6.5" fill="#141438" >70</text>
<rect x="314" y="383" width="4" height="1" fill="#333"/>
<text x="313" y="389.3" text-anchor="end" font-family="Liberation Sans" font-size="6.5" fill="#141438" >440</text>
<rect x="314" y="387" width="4" height="1" fill="#333"/>
<text x="313" y="403.3" text-anchor="end" font-family="Liberation Sans" font-size="6.5" fill="#141438" >430</text>
<rect x="314" y="401" width="4" height="1" fill="#333"/>
<text x="313" y="417.3" text-anchor="end" font-family="Liberation Sans" font-size="6.5" fill="#141438" >420</text>
<rect x="314" y="415" width="4" height="1" fill="#333"/>
<text x="313" y="431.3" text-anchor="end" font-family="Liberation Sans" font-size="6.5" fill="#141438" >410</text>
<rect x="314" y="429" width="4" height="1" fill="#333"/>
<text x="313" y="445.3" text-anchor="end" font-family="Liberation Sans" font-size="6.5" fill="#141438" >400</text>
<rect x="314" y="443" width="4" height="1" fill="#333"/>
<text x="313" y="450.3" text-anchor="end" font-family="Liberation Sans" font-size="6.4" fill="#141438" letter-spacing="-0.35">17980</text>
<rect x="314" y="448" width="4" height="1" fill="#333"/>
<text x="313" y="469.3" text-anchor="end" font-family="Liberation Sans" font-size="6.4" fill="#141438" letter-spacing="-0.35">17970</text>
<rect x="314" y="467" width="4" height="1" fill="#333"/>
<text x="313" y="487.3" text-anchor="end" font-family="Liberation Sans" font-size="6.4" fill="#141438" letter-spacing="-0.35">17960</text>
<rect x="314" y="485" width="4" height="1" fill="#333"/>
<text x="313" y="506.3" text-anchor="end" font-family="Liberation Sans" font-size="6.4" fill="#141438" letter-spacing="-0.35">17950</text>
<rect x="314" y="504" width="4" height="1" fill="#333"/>
<text x="0" y="0" text-anchor="middle" font-family="Liberation Sans" font-size="6.8" fill="#141438" transform="translate(299.5,355) rotate(-90)">Heart (bpm)</text>
<text x="0" y="0" text-anchor="middle" font-family="Liberation Sans" font-size="6.8" fill="#141438" transform="translate(299.5,415) rotate(-90)">Altitu (m)</text>
<text x="0" y="0" text-anchor="middle" font-family="Liberation Sans" font-size="6.5" fill="#141438" transform="translate(293.5,477.5) rotate(-90)">Inclin (%)</text>
<text x="319" y="393.5" font-family="Liberation Sans" font-size="6.2" fill="#ff8c00">Lasciare che la bici proceda, senza pedalare <tspan fill="#ff2020">Frenata</tspan></text>
<rect x="318" y="520" width="1" height="3" fill="#555"/>
<text x="318.0" y="529.5" text-anchor="middle" font-family="Liberation Sans" font-size="6.2" fill="#18285a" font-weight="bold" letter-spacing="-0.2">00:00</text>
<rect x="343" y="520" width="1" height="3" fill="#555"/>
<text x="343.1" y="529.5" text-anchor="middle" font-family="Liberation Sans" font-size="6.2" fill="#18285a" font-weight="bold" letter-spacing="-0.2">00:00</text>
<rect x="368" y="520" width="1" height="3" fill="#555"/>
<text x="368.3" y="529.5" text-anchor="middle" font-family="Liberation Sans" font-size="6.2" fill="#18285a" font-weight="bold" letter-spacing="-0.2">00:00</text>
<rect x="393" y="520" width="1" height="3" fill="#555"/>
<text x="393.4" y="529.5" text-anchor="middle" font-family="Liberation Sans" font-size="6.2" fill="#18285a" font-weight="bold" letter-spacing="-0.2">00:00</text>
<rect x="419" y="520" width="1" height="3" fill="#555"/>
<text x="418.6" y="529.5" text-anchor="middle" font-family="Liberation Sans" font-size="6.2" fill="#18285a" font-weight="bold" letter-spacing="-0.2">00:00</text>
<rect x="444" y="520" width="1" height="3" fill="#555"/>
<text x="443.8" y="529.5" text-anchor="middle" font-family="Liberation Sans" font-size="6.2" fill="#18285a" font-weight="bold" letter-spacing="-0.2">00:00</text>
<rect x="469" y="520" width="1" height="3" fill="#555"/>
<text x="468.9" y="529.5" text-anchor="middle" font-family="Liberation Sans" font-size="6.2" fill="#18285a" font-weight="bold" letter-spacing="-0.2">00:01</text>
<rect x="494" y="520" width="1" height="3" fill="#555"/>
<text x="494.0" y="529.5" text-anchor="middle" font-family="Liberation Sans" font-size="6.2" fill="#18285a" font-weight="bold" letter-spacing="-0.2">00:01</text>
<rect x="519" y="520" width="1" height="3" fill="#555"/>
<text x="519.2" y="529.5" text-anchor="middle" font-family="Liberation Sans" font-size="6.2" fill="#18285a" font-weight="bold" letter-spacing="-0.2">00:01</text>
<rect x="544" y="520" width="1" height="3" fill="#555"/>
<text x="544.4" y="529.5" text-anchor="middle" font-family="Liberation Sans" font-size="6.2" fill="#18285a" font-weight="bold" letter-spacing="-0.2">00:01</text>
<rect x="570" y="520" width="1" height="3" fill="#555"/>
<text x="569.5" y="529.5" text-anchor="middle" font-family="Liberation Sans" font-size="6.2" fill="#18285a" font-weight="bold" letter-spacing="-0.2">00:01</text>
<rect x="595" y="520" width="1" height="3" fill="#555"/>
<text x="594.6" y="529.5" text-anchor="middle" font-family="Liberation Sans" font-size="6.2" fill="#18285a" font-weight="bold" letter-spacing="-0.2">00:01</text>
<rect x="620" y="520" width="1" height="3" fill="#555"/>
<text x="619.8" y="529.5" text-anchor="middle" font-family="Liberation Sans" font-size="6.2" fill="#18285a" font-weight="bold" letter-spacing="-0.2">00:02</text>
<rect x="645" y="520" width="1" height="3" fill="#555"/>
<text x="645.0" y="529.5" text-anchor="middle" font-family="Liberation Sans" font-size="6.2" fill="#18285a" font-weight="bold" letter-spacing="-0.2">00:02</text>
<rect x="670" y="520" width="1" height="3" fill="#555"/>
<text x="670.1" y="529.5" text-anchor="middle" font-family="Liberation Sans" font-size="6.2" fill="#18285a" font-weight="bold" letter-spacing="-0.2">00:02</text>
<rect x="695" y="520" width="1" height="3" fill="#555"/>
<text x="695.2" y="529.5" text-anchor="middle" font-family="Liberation Sans" font-size="6.2" fill="#18285a" font-weight="bold" letter-spacing="-0.2">00:02</text>
<rect x="720" y="520" width="1" height="3" fill="#555"/>
<text x="720.4" y="529.5" text-anchor="middle" font-family="Liberation Sans" font-size="6.2" fill="#18285a" font-weight="bold" letter-spacing="-0.2">00:02</text>
<rect x="746" y="520" width="1" height="3" fill="#555"/>
<text x="745.5" y="529.5" text-anchor="middle" font-family="Liberation Sans" font-size="6.2" fill="#18285a" font-weight="bold" letter-spacing="-0.2">00:02</text>
<rect x="771" y="520" width="1" height="3" fill="#555"/>
<text x="770.7" y="529.5" text-anchor="middle" font-family="Liberation Sans" font-size="6.2" fill="#18285a" font-weight="bold" letter-spacing="-0.2">00:03</text>
<rect x="796" y="520" width="1" height="3" fill="#555"/>
<text x="795.8" y="529.5" text-anchor="middle" font-family="Liberation Sans" font-size="6.2" fill="#18285a" font-weight="bold" letter-spacing="-0.2">00:03</text>
<rect x="821" y="520" width="1" height="3" fill="#555"/>
<text x="821.0" y="529.5" text-anchor="middle" font-family="Liberation Sans" font-size="6.2" fill="#18285a" font-weight="bold" letter-spacing="-0.2">00:03</text>
<rect x="846" y="520" width="1" height="3" fill="#555"/>
<text x="846.1" y="529.5" text-anchor="middle" font-family="Liberation Sans" font-size="6.2" fill="#18285a" font-weight="bold" letter-spacing="-0.2">00:03</text>
<rect x="871" y="520" width="1" height="3" fill="#555"/>
<text x="871.3" y="529.5" text-anchor="middle" font-family="Liberation Sans" font-size="6.2" fill="#18285a" font-weight="bold" letter-spacing="-0.2">00:03</text>
<rect x="896" y="520" width="1" height="3" fill="#555"/>
<text x="896.4" y="529.5" text-anchor="middle" font-family="Liberation Sans" font-size="6.2" fill="#18285a" font-weight="bold" letter-spacing="-0.2">00:03</text>
<rect x="922" y="520" width="1" height="3" fill="#555"/>
<text x="921.6" y="529.5" text-anchor="middle" font-family="Liberation Sans" font-size="6.2" fill="#18285a" font-weight="bold" letter-spacing="-0.2">00:04</text>
<rect x="947" y="520" width="1" height="3" fill="#555"/>
<text x="946.8" y="529.5" text-anchor="middle" font-family="Liberation Sans" font-size="6.2" fill="#18285a" font-weight="bold" letter-spacing="-0.2">00:04</text>
<rect x="972" y="520" width="1" height="3" fill="#555"/>
<text x="971.9" y="529.5" text-anchor="middle" font-family="Liberation Sans" font-size="6.2" fill="#18285a" font-weight="bold" letter-spacing="-0.2">00:04</text>
<rect x="997" y="520" width="1" height="3" fill="#555"/>
<text x="997.0" y="529.5" text-anchor="middle" font-family="Liberation Sans" font-size="6.2" fill="#18285a" font-weight="bold" letter-spacing="-0.2">00:04</text>
<text x="657" y="538.5" text-anchor="middle" font-family="Liberation Sans" font-size="6.3" fill="#1a1a1a" >Tempo</text>
</svg>
<div class="a" style="left:266px;top:541px;width:756px;height:13px;background:#f0f0f0;border-top:1px solid #d4d4d4"></div>
<div class="t" style="left:268.7px;top:545.5px;font-size:6.3px;color:#222">Profilo: Profile Attached; Valore di registrazione = 1 s</div>
<div class="a" style="left:0px;top:554px;width:1024px;height:1px;background:linear-gradient(90deg,#203060,#405070 30%,#806040 50%,#306050 70%,#204060)"></div>
<div class="a" style="left:0px;top:555px;width:1024px;height:21px;background:#131313"></div>
<div class="a" style="left:0px;top:576px;width:1024px;height:2px;background:#f0f0f0"></div>
<div class="a" style="left:26px;top:555px;width:183.5px;height:21px;background:#f0f0f0"></div>
<svg class="a" style="left:0;top:555px" width="1024" height="21">
<path d="M8 6.3 L12.3 5.6 V9.8 H8 Z M13 5.5 L17.3 4.8 V9.8 H13 Z M8 10.5 H12.3 V14.7 L8 14 Z M13 10.5 H17.3 V15.5 L13 14.8 Z" fill="#fff"/>
<circle cx="38" cy="9.2" r="2.8" fill="none" stroke="#222" stroke-width="0.8"/><path d="M36 11.2 L32.5 14.7" stroke="#222" stroke-width="0.9"/>
<text x="47" y="13.3" font-family="Liberation Sans" font-size="7.9" fill="#2a2a2a">Scrivi qui per eseguire la ricerca</text>
<circle cx="222" cy="10.5" r="3.6" fill="none" stroke="#fff" stroke-width="1"/>
<rect x="243.5" y="7" width="6.5" height="7" fill="none" stroke="#ddd" stroke-width="0.8"/><path d="M242.5 6.5 V14.5 M251 6.5 V14.5 M250.5 9 H252" stroke="#ddd" stroke-width="0.6"/>
<path d="M270 11 Q270 5 275.5 5 Q281 5 281 10.5 H272.8 Q273.3 14 277 14 Q279 14 280.5 13 V15 Q279 16 276.5 16 Q270 16 270 11 Z M272.9 9 H278.2 Q278 7 275.5 7 Q273.2 7 272.9 9 Z" fill="#1d84e0"/>
<path d="M295 10.5 L301 5 L307 10.5 H305.3 V15.5 H302.5 V12.5 H299.5 V15.5 H296.7 V10.5 Z" fill="#fff"/>
<rect x="324" y="5" width="9.5" height="10.5" fill="#1d6fc4"/><rect x="319.5" y="7" width="7.5" height="7.5" fill="#0a58b0"/><circle cx="323.2" cy="10.7" r="2" fill="none" stroke="#fff" stroke-width="1"/><rect x="327.5" y="7.5" width="5.5" height="5" fill="#38a0f0"/>
<path d="M347 7.5 H358.5 V16 H347 Z" fill="#f4f4f4"/><path d="M350.5 7.5 Q350.5 4.5 352.75 4.5 Q355 4.5 355 7.5" fill="none" stroke="#f4f4f4" stroke-width="0.9"/><rect x="350" y="9.5" width="2.4" height="2.4" fill="#f25022"/><rect x="353" y="9.5" width="2.4" height="2.4" fill="#7fba00"/><rect x="350" y="12.4" width="2.4" height="2.4" fill="#00a4ef"/><rect x="353" y="12.4" width="2.4" height="2.4" fill="#ffb900"/>
<path d="M373 6 H378 L379 7 H384.8 V15.3 H373 Z" fill="#f0c040"/><rect x="373" y="9" width="11.8" height="6.3" fill="#ffd868"/><rect x="376.5" y="11.5" width="5" height="3.8" fill="#3a8ae0"/>
<circle cx="405" cy="10.6" r="6" fill="#fff"/><circle cx="405" cy="10.6" r="4.8" fill="#1a3070"/><text x="405" y="13.6" text-anchor="middle" font-family="Liberation Sans" font-size="8" font-weight="bold" fill="#fff">B</text>
<path d="M426 11 Q426 5.5 431 5.5 Q436 5.5 436 10.5 H428.5 Q429 14 431.5 14 Q433.5 14 435 12.8 V14.7 Q433.5 16 431 16 Q426 16 426 11 Z M428.6 9 H433.5 Q433.3 7.2 431 7.2 Q429 7.2 428.6 9 Z" fill="#3aaaf0"/><path d="M425.5 15.5 Q424 12 430 8 Q436 4.5 438 5.5 Q438.5 7 436 8.5" fill="none" stroke="#e8b020" stroke-width="0.9"/>
<circle cx="457.5" cy="11" r="6" fill="#ff6020"/><circle cx="457.5" cy="11.5" r="3.6" fill="#7040c0"/><path d="M452 8 Q454 4 458 4.5 Q462 5 463.5 9 Q462 6.5 459 7 Z" fill="#ffb020"/>
<circle cx="484" cy="11" r="6" fill="#db4437"/><path d="M484 11 L478.8 8 A6 6 0 0 0 481 16.2 Z" fill="#0f9d58"/><path d="M484 11 L481 16.2 A6 6 0 0 0 490 11 L489.2 8 Z" fill="#f4b400"/><circle cx="484" cy="11" r="2.8" fill="#fff"/><circle cx="484" cy="11" r="2.1" fill="#4285f4"/>
<g transform="translate(503.6,5) scale(1.25)"><path d="M2.3 0.6 H9.2 Q9.9 0.8 9.6 1.6 L8 7.6 Q7.8 8.2 7.1 8.2 H1 Q0.3 8 0.6 7.3 L2 1.2 Q2.1 0.6 2.3 0.6 Z" fill="#fff" stroke="#0f4a68" stroke-width="1.15"/><path d="M1.6 2.7 Q3 2.4 3.4 1.6 M1.9 2.6 H4.2 M1.3 5.2 H2.6 M6.8 5 Q7.8 4.6 8.2 3.6" stroke="#0f4a68" stroke-width="1.1" fill="none"/><path d="M1.4 3.2 H8.4 L8 4.6 H1.1 Z" fill="#0f4a68" opacity="0.0"/></g>
<rect x="499" y="19.5" width="22" height="1.5" fill="#e8d8c0"/>
<circle cx="882" cy="10.5" r="5.8" fill="#1e9be8"/><circle cx="882" cy="10.5" r="4.9" fill="none" stroke="#fff" stroke-width="0.6"/><text x="882" y="13.5" text-anchor="middle" font-family="Liberation Sans" font-size="8" font-weight="bold" fill="#fff">?</text><circle cx="886" cy="14.6" r="1.9" fill="#f0a020"/>
<path d="M894 12 L897 8.8 L900 12" fill="none" stroke="#ddd" stroke-width="0.8"/>
<path d="M907.5 14 L913.5 8 M909.5 14 Q909.5 11 913 10.5 M911.5 14 Q911.5 13 913 12.5" fill="none" stroke="#ccc" stroke-width="0.7"/>
<path d="M918.5 9 H920.5 L922.5 7 V14.5 L920.5 12.5 H918.5 Z" fill="none" stroke="#ccc" stroke-width="0.7"/><path d="M924 9 Q925 10.7 924 12.5 M925.5 8 Q927 10.7 925.5 13.5" fill="none" stroke="#ccc" stroke-width="0.6"/>
<rect x="931" y="8" width="3" height="1.5" fill="#ddd"/><rect x="933" y="9.5" width="6" height="4" fill="none" stroke="#ddd" stroke-width="0.8"/>
<path d="M946 14 L949 11 M948.5 9.5 L951 7 M952 8 L950 10" stroke="#ddd" stroke-width="1.1"/><circle cx="947" cy="13" r="1.3" fill="none" stroke="#ddd" stroke-width="0.7"/><circle cx="952" cy="8" r="1.3" fill="none" stroke="#ddd" stroke-width="0.7"/>
<text x="977" y="8.3" text-anchor="middle" font-family="Liberation Sans" font-size="6.2" fill="#eee">20:52</text>
<text x="977.3" y="17.8" text-anchor="middle" font-family="Liberation Sans" font-size="6.2" fill="#eee">16/06/2020</text>
<path d="M1002 5.5 H1012 V12.5 H1006 L1003.5 14.5 V12.5 H1002 Z" fill="#e8e8e8"/><path d="M1003.5 7.5 H1010.5 M1003.5 9.5 H1010.5" stroke="#222" stroke-width="0.6"/><circle cx="1011" cy="14" r="3.8" fill="#131313" stroke="#ddd" stroke-width="0.6"/><text x="1011" y="16.2" text-anchor="middle" font-family="Liberation Sans" font-size="6" fill="#fff">8</text>
</svg>
<div class="a" style="left:155px;top:34px;width:519px;height:291px;background:#f0f0f0;border:1px solid #b0b0b0;box-shadow:0 0 3px 1px rgba(0,0,0,0.18)"></div>
<div class="a" style="left:156px;top:35px;width:517px;height:15px;background:#fff"></div>
<svg class="a" style="left:159px;top:37px" width="9.5" height="8.5" viewBox="0 0 10 8.5"><path d="M2.3 0.6 H9.2 Q9.9 0.8 9.6 1.6 L8 7.6 Q7.8 8.2 7.1 8.2 H1 Q0.3 8 0.6 7.3 L2 1.2 Q2.1 0.6 2.3 0.6 Z" fill="#fff" stroke="#0f4a68" stroke-width="1.15"/><path d="M1.6 2.7 Q3 2.4 3.4 1.6 M1.9 2.6 H4.2 M1.3 5.2 H2.6 M6.8 5 Q7.8 4.6 8.2 3.6" stroke="#0f4a68" stroke-width="1.1" fill="none"/><path d="M1.4 3.2 H8.4 L8 4.6 H1.1 Z" fill="#0f4a68" opacity="0.0"/></svg>
<div class="t" style="left:171px;top:38.5px;color:#8a8a8a;font-size:6.6px">Edit Profiles</div>
<svg class="a" style="left:663px;top:38px" width="6.5" height="6.5"><path d="M0.3 0.3 L6.2 6.2 M6.2 0.3 L0.3 6.2" stroke="#808080" stroke-width="0.7"/></svg>
<div class="a" style="left:161px;top:56px;width:506px;height:242px;border:1px solid #dcdcdc"></div>
<div class="a" style="left:367px;top:64px;width:292px;height:227px;border:1px solid #dcdcdc"></div>
<div class="t" style="left:372px;top:61.5px;background:#f0f0f0;padding:0 1px">Edit Profile</div>
<div class="btn" style="left:168px;top:69px;width:46px;height:11px;line-height:10px;">Delete</div>
<div class="btn" style="left:168px;top:88px;width:46px;height:11px;line-height:10px;">Copy</div>
<div class="btn" style="left:168px;top:108px;width:46px;height:11px;line-height:10px;">Export..</div>
<div class="btn" style="left:168px;top:127px;width:46px;height:11px;line-height:10px;">Import..</div>
<div class="btn" style="left:168px;top:146px;width:46px;height:21px;line-height:7.6px;padding-top:2.5px">Extract from<br>Ride File</div>
<div class="btn" style="left:168px;top:174px;width:46px;height:23px;line-height:7.6px;padding-top:3px;background:#e5f1fb;border-color:#3b8ad8">Extract from<br>Device</div>
<div class="t" style="left:226px;top:59.5px;">Profiles (Drag to Move)</div>
<div class="a" style="left:225px;top:68px;width:128px;height:225px;background:#fff;border:1px solid #a0a0a0"></div>
<div class="a" style="left:226px;top:69px;width:117px;height:8.6px;background:#3998fa"></div>
<div class="t" style="left:228.5px;top:70.0px;color:#fff">Extracted on 16/06/2020 Prof #3</div>
<div class="t" style="left:228.5px;top:78.5px;color:#1a1a1a">Extracted on 16/06/2020 Prof #1</div>
<div class="t" style="left:228.5px;top:87.0px;color:#1a1a1a">Extracted on 16/06/2020 Prof #2</div>
<div class="t" style="left:228.5px;top:95.5px;color:#1a1a1a">Road Bike 16/06/2020 Prof# 3</div>
<div class="t" style="left:228.5px;top:104.0px;color:#1a1a1a">giant ocr v03 07/06/2020 Prof# 3</div>
<div class="t" style="left:228.5px;top:112.5px;color:#1a1a1a">Giant ocr 07/06/2020 Prof# 3 superato</div>
<div class="t" style="left:228.5px;top:121.0px;color:#1a1a1a">epic gsc10 v02 06/06/2020 Prof# 2</div>
<div class="t" style="left:228.5px;top:129.5px;color:#1a1a1a">epic gsc-10 06/06/2020 Prof# 2 superato</div>
<div class="t" style="left:228.5px;top:138.0px;color:#1a1a1a">sample DFPM fit: 4/9/2008</div>
<div class="t" style="left:345px;top:70px;font-size:7px;color:#444">&#x2c4;</div>
<div class="t" style="left:345px;top:284px;font-size:7px;color:#444">&#x2c5;</div>
<div class="a" style="left:373px;top:86.5px;width:280px;height:180px;background:#fff;border:1px solid #dcdcdc"></div>
<div class="a" style="left:373px;top:74.5px;width:26px;height:13px;background:#fff;border:1px solid #dcdcdc;border-bottom:none"></div>
<div class="a" style="left:399px;top:76px;width:38.5px;height:11px;background:#f0f0f0;border:1px solid #dcdcdc;border-bottom:none"></div>
<div class="a" style="left:437.5px;top:76px;width:43px;height:11px;background:#f0f0f0;border:1px solid #dcdcdc;border-bottom:none;border-left:none"></div>
<div class="a" style="left:480px;top:76px;width:46px;height:11px;background:#f0f0f0;border:1px solid #dcdcdc;border-bottom:none;border-left:none"></div>
<div class="t" style="left:377px;top:77.5px;">Basic</div>
<div class="t" style="left:404px;top:79px;">Advanced</div>
<div class="t" style="left:442px;top:79px;">Wireless IDs</div>
<div class="t" style="left:485px;top:79px;">PowerStroke</div>
<div class="t" style="left:380px;top:98px;">Profile Name</div>
<div class="inp" style="left:379px;top:107px;width:128px;height:10.5px;line-height:9px;padding-left:2px">Extracted on 16/06/2020 Prof #3</div>
<div class="t" style="left:380px;top:123.5px;">Profile Note</div>
<div class="inp" style="left:379px;top:133px;width:128px;height:120px;line-height:8px;padding-left:2px">Extracted from s/n 10-23-19-08-05-0C-<br>90-00-00-00-00-05-75-1A-0B</div>
<div class="t" style="left:498px;top:134px;font-size:7px;color:#444">&#x2c4;</div>
<div class="t" style="left:498px;top:244px;font-size:7px;color:#444">&#x2c5;</div>
<div class="a" style="left:519px;top:106px;width:122px;height:83px;border:1px solid #e4e4e4"></div>
<div class="t" style="left:527px;top:112px;">Rider Weight (kg)</div>
<div class="t" style="left:587px;top:112px;">FTP (W)</div>
<div class="inp" style="left:526px;top:119.5px;width:40px;height:11px;line-height:9px;padding-left:2px">63</div>
<div class="a" style="left:556px;top:120.5px;width:9px;height:9px;background:#f0f0f0;border-left:1px solid #d8d8d8"></div>
<div class="t" style="left:557.5px;top:120.0px;font-size:5px;line-height:5px;color:#555">&#x25B4;</div>
<div class="t" style="left:557.5px;top:124.5px;font-size:5px;line-height:5px;color:#555">&#x25BE;</div>
<div class="inp" style="left:586px;top:119.5px;width:40px;height:11px;line-height:9px;padding-left:2px">207,1</div>
<div class="a" style="left:616px;top:120.5px;width:9px;height:9px;background:#f0f0f0;border-left:1px solid #d8d8d8"></div>
<div class="t" style="left:617.5px;top:120.0px;font-size:5px;line-height:5px;color:#555">&#x25B4;</div>
<div class="t" style="left:617.5px;top:124.5px;font-size:5px;line-height:5px;color:#555">&#x25BE;</div>
<div class="t" style="left:527px;top:137.5px;">Bike + Other Weight (kg)</div>
<div class="inp" style="left:526px;top:145px;width:40px;height:11px;line-height:9px;padding-left:2px">12,7</div>
<div class="a" style="left:556px;top:146px;width:9px;height:9px;background:#f0f0f0;border-left:1px solid #d8d8d8"></div>
<div class="t" style="left:557.5px;top:145.5px;font-size:5px;line-height:5px;color:#555">&#x25B4;</div>
<div class="t" style="left:557.5px;top:150.0px;font-size:5px;line-height:5px;color:#555">&#x25BE;</div>
<div class="t" style="left:527px;top:163px;">Total Weight (kg)</div>
<div class="inp" style="left:526px;top:171px;width:40px;height:11px;line-height:9px;padding-left:2px">75,7</div>
<div class="a" style="left:556px;top:172px;width:9px;height:9px;background:#f0f0f0;border-left:1px solid #d8d8d8"></div>
<div class="t" style="left:557.5px;top:171.5px;font-size:5px;line-height:5px;color:#555">&#x25B4;</div>
<div class="t" style="left:557.5px;top:176.0px;font-size:5px;line-height:5px;color:#555">&#x25BE;</div>
<div class="btn" style="left:578px;top:171px;width:56px;height:11px;line-height:10px;">Get from Device</div>
<div class="a" style="left:519px;top:196.5px;width:122px;height:57px;border:1px solid #e4e4e4"></div>
<div class="t" style="left:527px;top:201px;">Tire Sidewall Marking</div>
<div class="inp" style="left:526px;top:210px;width:62px;height:10.5px;line-height:8.5px;padding-left:2px">&lt;Misurata&gt;</div>
<div class="a" style="left:578px;top:211px;width:9px;height:8.5px;background:#e6e6e6"></div>
<div class="t" style="left:580px;top:211.75px;font-size:7px;color:#555">&#x2c5;</div>
<div class="t" style="left:527px;top:227.5px;">Tire Circumference (mm)</div>
<div class="inp" style="left:526px;top:235.5px;width:40px;height:11px;line-height:9px;padding-left:2px">2105</div>
<div class="a" style="left:556px;top:236.5px;width:9px;height:9px;background:#f0f0f0;border-left:1px solid #d8d8d8"></div>
<div class="t" style="left:557.5px;top:236.0px;font-size:5px;line-height:5px;color:#555">&#x25B4;</div>
<div class="t" style="left:557.5px;top:240.5px;font-size:5px;line-height:5px;color:#555">&#x25BE;</div>
<div class="btn" style="left:577.5px;top:235.5px;width:56px;height:11px;line-height:10px;">Get from Device</div>
<div class="inp" style="left:372px;top:273.5px;width:39px;height:11px;line-height:9px;padding-left:2px">metric</div>
<div class="a" style="left:401px;top:274.5px;width:9px;height:9px;background:#e6e6e6"></div>
<div class="t" style="left:403px;top:275.5px;font-size:7px;color:#555">&#x2c5;</div>
<div class="btn" style="left:465.5px;top:274px;width:72px;height:11px;line-height:10px;">Send to Device*</div>
<div class="btn" style="left:590px;top:274px;width:63px;height:11px;line-height:10px;">Restore Settings</div>
<div class="t" style="left:384.5px;top:308px;">* Set Active Profile in Device</div>
<div class="inp" style="left:465px;top:305.5px;width:74px;height:11px;line-height:9px;padding-left:2px">Profile 4</div>
<div class="a" style="left:529px;top:306.5px;width:9px;height:9px;background:#e6e6e6"></div>
<div class="t" style="left:531px;top:307.5px;font-size:7px;color:#555">&#x2c5;</div>
<div class="btn" style="left:557.5px;top:306px;width:49px;height:11px;line-height:10px;">Accept</div>
<div class="btn" style="left:614px;top:306px;width:52px;height:11px;line-height:10px;">Cancel</div>
<div class="a" style="left:352px;top:143px;width:126px;height:86px;background:rgba(0,0,0,0.10);filter:blur(2.5px)"></div>
<div class="a" style="left:355px;top:145px;width:120px;height:81px;background:#f0f0f0;border:1px solid #8a8a8a"></div>
<div class="a" style="left:356px;top:146px;width:118px;height:16px;background:#fff"></div>
<svg class="a" style="left:359px;top:149px" width="9.5" height="8.5" viewBox="0 0 10 8.5"><path d="M2.3 0.6 H9.2 Q9.9 0.8 9.6 1.6 L8 7.6 Q7.8 8.2 7.1 8.2 H1 Q0.3 8 0.6 7.3 L2 1.2 Q2.1 0.6 2.3 0.6 Z" fill="#fff" stroke="#0f4a68" stroke-width="1.15"/><path d="M1.6 2.7 Q3 2.4 3.4 1.6 M1.9 2.6 H4.2 M1.3 5.2 H2.6 M6.8 5 Q7.8 4.6 8.2 3.6" stroke="#0f4a68" stroke-width="1.1" fill="none"/><path d="M1.4 3.2 H8.4 L8 4.6 H1.1 Z" fill="#0f4a68" opacity="0.0"/></svg>
<svg class="a" style="left:462.5px;top:149.5px" width="7" height="7"><path d="M0.5 0.5 L6.5 6.5 M6.5 0.5 L0.5 6.5" stroke="#333" stroke-width="0.8"/></svg>
<div class="t" style="left:361.5px;top:166.5px;line-height:8.1px;color:#200808;-webkit-text-stroke:0.12px #200808">Warning, you already have a<br>matching profile named "Extracted<br>on 16/06/2020 Prof #1". (The one that<br>is higher in the list will be used.)</div>
<div class="btn" style="left:395px;top:208px;width:38.5px;height:11px;line-height:10px;border-color:#2a7ad0;border-width:1.2px">OK</div>
</body></html>
